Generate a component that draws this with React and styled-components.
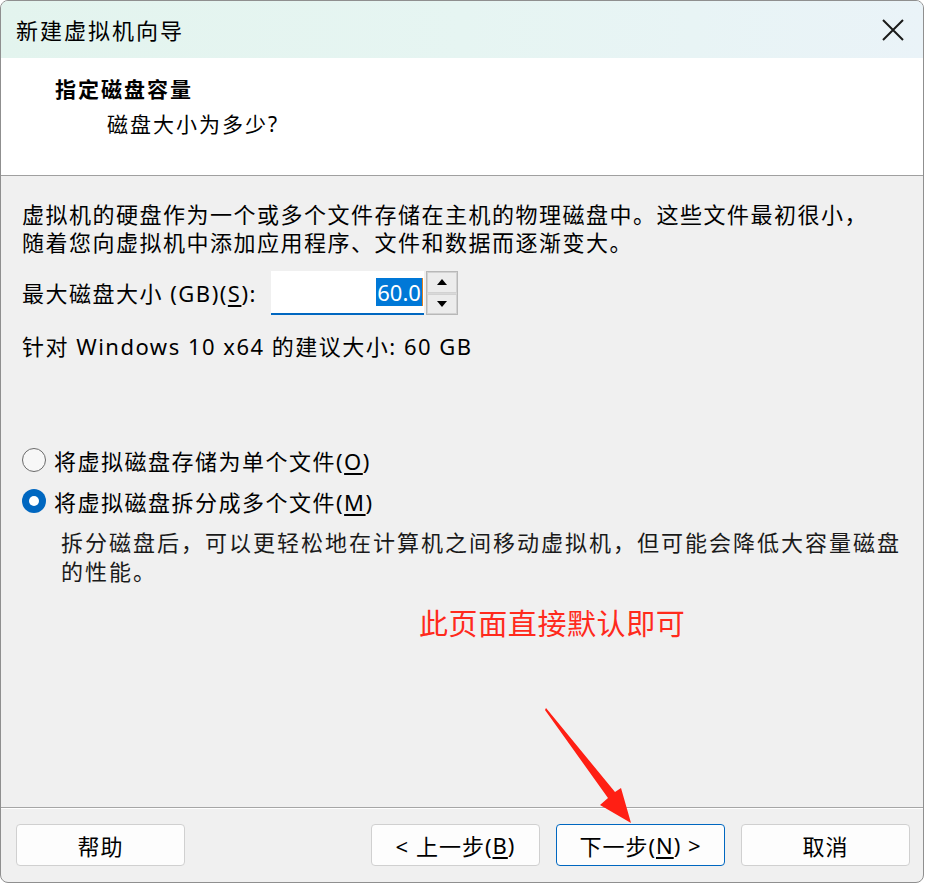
import React from "react";
import styled, { createGlobalStyle } from "styled-components";

const GlobalStyle = createGlobalStyle`
  html, body {
    margin: 0;
    padding: 0;
    background: #ffffff;
  }
  body {
    font-family: "Segoe UI", "Noto Sans", "Noto Sans CJK SC", sans-serif;
    color: #000;
  }
`;

const Window = styled.div`
  position: relative;
  width: 924px;
  height: 883px;
  box-sizing: border-box;
  border: 1px solid #8f8f8f;
  border-radius: 8px;
  overflow: hidden;
  display: flex;
  flex-direction: column;
  background: #f0f0f0;
`;

const TitleBar = styled.div`
  height: 57px;
  flex: none;
  display: flex;
  align-items: center;
  justify-content: space-between;
  padding: 0 18px 0 15px;
  background: linear-gradient(90deg, #e3f4ee 0%, #e6f5f2 50%, #eaf3f8 100%);
`;

const Title = styled.div`
  font-size: 22px;
  letter-spacing: 2px;
  line-height: 30px;
`;

const CloseButton = styled.div`
  width: 24px;
  height: 24px;
  display: flex;
  align-items: center;
  justify-content: center;
`;

const Header = styled.div`
  height: 118px;
  flex: none;
  box-sizing: border-box;
  background: #ffffff;
  border-bottom: 1px solid #a0a0a0;
  padding-top: 16px;
`;

const HeaderTitle = styled.div`
  padding-left: 54px;
  font-size: 21px;
  font-weight: 700;
  letter-spacing: 2px;
  line-height: 30px;
`;

const HeaderSub = styled.div`
  padding-left: 106px;
  margin-top: 5px;
  font-size: 21px;
  letter-spacing: 2px;
  line-height: 30px;
`;

const Body = styled.div`
  flex: 1;
  padding: 24px 0 0 21px;
  font-size: 22px;
  letter-spacing: 1.5px;
  white-space: nowrap;
`;

const Para = styled.div`
  line-height: 28px;
`;

const SpinRow = styled.div`
  display: flex;
  align-items: center;
  margin-top: 15px;
  height: 44px;
`;

const Label = styled.span`
  line-height: 28px;
`;

const Key = styled.span`
  text-decoration: underline;
  text-underline-offset: 3px;
`;

const SpinInput = styled.div`
  margin-left: 14px;
  width: 153px;
  height: 44px;
  box-sizing: border-box;
  background: #ffffff;
  border-bottom: 2px solid #0067c0;
  display: flex;
  align-items: center;
  justify-content: flex-end;
  padding-right: 1px;
`;

const Selected = styled.span`
  background: #0078d7;
  color: #ffffff;
  letter-spacing: 0;
  line-height: 28px;
  padding: 0 1px;
  border-right: 1px solid #e08020;
`;

const Spinner = styled.div`
  margin-left: 2px;
  width: 32px;
  height: 44px;
  display: flex;
  flex-direction: column;
  gap: 1px;
  border: 1px solid #b8b8b8;
  box-sizing: border-box;
  background: #d9d9d9;
`;

const SpinButton = styled.div`
  flex: 1;
  background: #ececec;
  border: 1px solid #d2d2d2;
  display: flex;
  align-items: center;
  justify-content: center;
`;

const Arrow = styled.span`
  width: 0;
  height: 0;
  border-left: 5px solid transparent;
  border-right: 5px solid transparent;
  ${(p) =>
    p.$down
      ? "border-top: 6px solid #000;"
      : "border-bottom: 6px solid #000;"}
`;

const Recommend = styled.div`
  margin-top: 17px;
  line-height: 28px;
`;

const Radios = styled.div`
  margin-top: 82px;
  display: flex;
  flex-direction: column;
  gap: 5px;
`;

const RadioRow = styled.div`
  display: flex;
  align-items: center;
  height: 36px;
  gap: 8px;
`;

const RadioCircle = styled.span`
  width: 24px;
  height: 24px;
  box-sizing: border-box;
  border-radius: 50%;
  flex: none;
  display: flex;
  align-items: center;
  justify-content: center;
  ${(p) =>
    p.$checked
      ? "background: #0067c0; border: none;"
      : "background: #f7f7f7; border: 1.5px solid #6a6a6a;"}
`;

const RadioDot = styled.span`
  width: 10px;
  height: 10px;
  border-radius: 50%;
  background: #ffffff;
`;

const Desc = styled.div`
  margin-top: 9px;
  padding-left: 39px;
  line-height: 29px;
  letter-spacing: 2px;
  color: #1a1a1a;
`;

const Note = styled.div`
  margin-top: 18px;
  padding-left: 397px;
  font-size: 29px;
  letter-spacing: 0.6px;
  line-height: 40px;
  color: #ff2a1c;
`;

const Footer = styled.div`
  height: 75px;
  flex: none;
  box-sizing: border-box;
  border-top: 1px solid #a6a6a6;
  box-shadow: inset 0 1px 0 #ffffff;
  padding: 16px 13px 0 15px;
  display: flex;
  align-items: flex-start;
`;

const ButtonGroup = styled.div`
  margin-left: auto;
  display: flex;
  gap: 16px;
`;

const Button = styled.div`
  width: 169px;
  height: 42px;
  box-sizing: border-box;
  background: #fdfdfd;
  border: 1px solid ${(p) => (p.$primary ? "#0067c0" : "#d0d0d0")};
  border-radius: 4px;
  display: flex;
  align-items: center;
  justify-content: center;
  font-size: 22px;
  letter-spacing: 1px;
  white-space: nowrap;
`;

const ArrowOverlay = styled.svg`
  position: absolute;
  left: 539px;
  top: 700px;
  pointer-events: none;
`;

export default function App() {
  return (
    <>
      <GlobalStyle />
      <Window>
        <TitleBar>
          <Title>新建虚拟机向导</Title>
          <CloseButton>
            <svg width="22" height="22" viewBox="0 0 22 22">
              <path d="M1 1 L21 21 M21 1 L1 21" stroke="#1a1a1a" strokeWidth="2" />
            </svg>
          </CloseButton>
        </TitleBar>

        <Header>
          <HeaderTitle>指定磁盘容量</HeaderTitle>
          <HeaderSub>磁盘大小为多少?</HeaderSub>
        </Header>

        <Body>
          <Para>
            虚拟机的硬盘作为一个或多个文件存储在主机的物理磁盘中。这些文件最初很小，
            <br />
            随着您向虚拟机中添加应用程序、文件和数据而逐渐变大。
          </Para>

          <SpinRow>
            <Label>
              最大磁盘大小 (GB)(<Key>S</Key>):
            </Label>
            <SpinInput>
              <Selected>60.0</Selected>
            </SpinInput>
            <Spinner>
              <SpinButton>
                <Arrow />
              </SpinButton>
              <SpinButton>
                <Arrow $down />
              </SpinButton>
            </Spinner>
          </SpinRow>

          <Recommend>针对 Windows 10 x64 的建议大小: 60 GB</Recommend>

          <Radios>
            <RadioRow>
              <RadioCircle />
              <span>
                将虚拟磁盘存储为单个文件(<Key>O</Key>)
              </span>
            </RadioRow>
            <RadioRow>
              <RadioCircle $checked>
                <RadioDot />
              </RadioCircle>
              <span>
                将虚拟磁盘拆分成多个文件(<Key>M</Key>)
              </span>
            </RadioRow>
          </Radios>

          <Desc>
            拆分磁盘后，可以更轻松地在计算机之间移动虚拟机，但可能会降低大容量磁盘
            <br />
            的性能。
          </Desc>

          <Note>此页面直接默认即可</Note>
        </Body>

        <Footer>
          <Button>帮助</Button>
          <ButtonGroup>
            <Button>
              &lt; 上一步(<Key>B</Key>)
            </Button>
            <Button $primary>
              下一步(<Key>N</Key>) &gt;
            </Button>
            <Button>取消</Button>
          </ButtonGroup>
        </Footer>

        <ArrowOverlay width="100" height="130" viewBox="539 700 100 130">
          <polygon
            points="545,707 614,791 620,787 630,822 599,804 607,797 544,709"
            fill="#ff1f14"
          />
        </ArrowOverlay>
      </Window>
    </>
  );
}
